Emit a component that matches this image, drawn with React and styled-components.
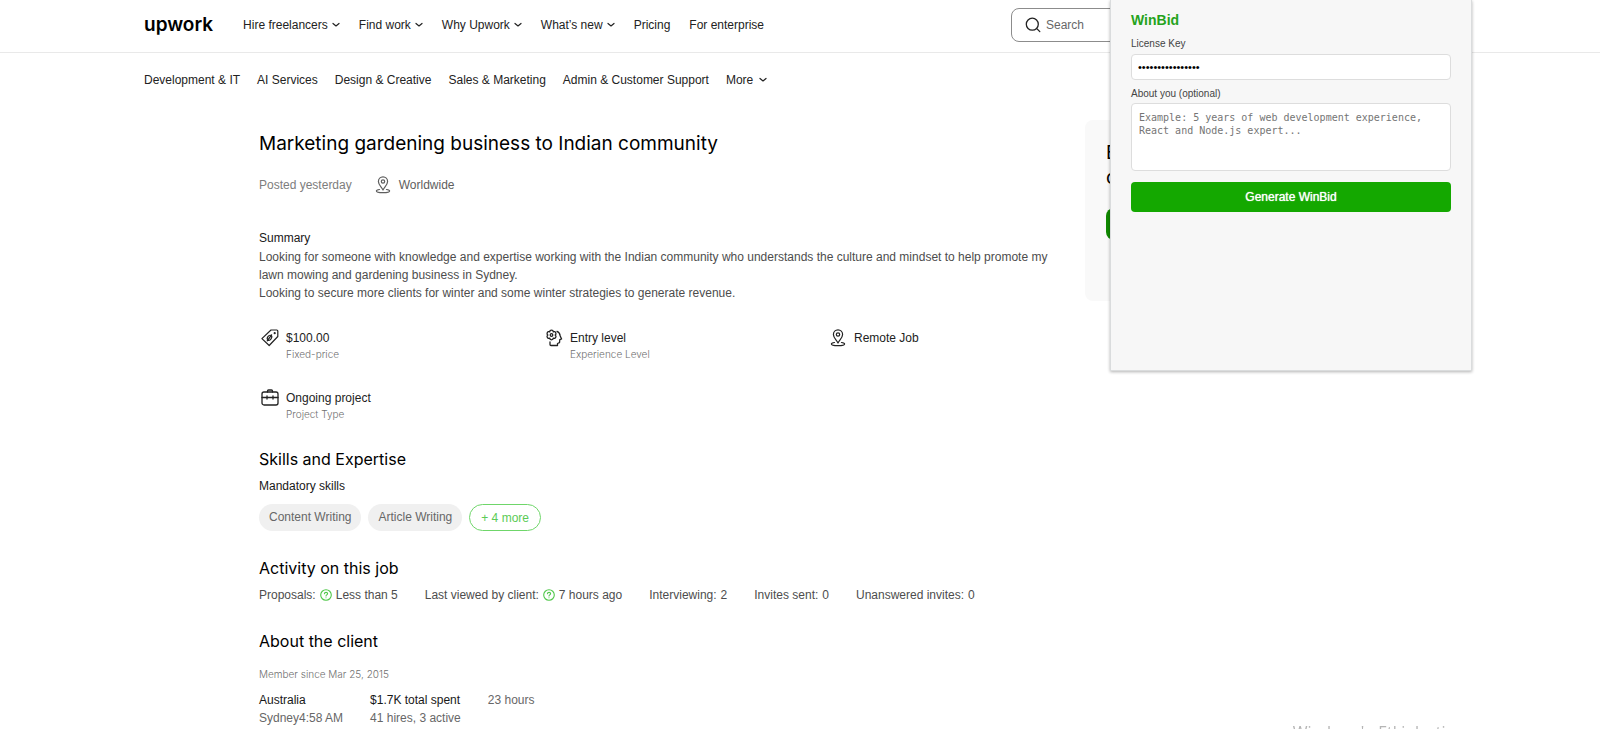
import React from "react";
import styled, { createGlobalStyle } from "styled-components";

const GlobalStyle = createGlobalStyle`
    *,
    *::before,
    *::after {
        box-sizing: border-box;
    }

    body {
        margin: 0;
        background: #fff;
        color: #222;
        font-family: "Liberation Sans", Arial, sans-serif;
        font-size: 12px;
        line-height: 18px;
    }

    h1, h2, h3, p, ul {
        margin: 0;
        padding: 0;
    }

    ul {
        list-style: none;
    }

    a {
        color: inherit;
        text-decoration: none;
    }
`;

const Header = styled.header`
    padding-bottom: 2px;
    border-bottom: 1px solid #e9e9e9;
`;

const Container = styled.div`
    display: flex;
    align-items: center;
    max-width: 1344px;
    height: ${props => props.height};
    margin: 0 auto;
    padding: 0 16px;
`;

const Logo = styled.a`
    margin-right: 30px;
    color: #000;
    font-family: Inter, sans-serif;
    font-size: 19px;
    font-weight: 600;
    line-height: 24px;
`;

const NavList = styled.ul`
    display: flex;
    gap: ${props => props.gap};
    white-space: nowrap;
`;

const NavButton = styled.button`
    display: flex;
    align-items: center;
    gap: ${props => (props.$wide ? "6px" : "4px")};
    padding: 0;
    border: 0;
    background: none;
    color: inherit;
    font: inherit;
    cursor: pointer;
`;

const SearchBox = styled.form`
    display: flex;
    align-items: center;
    gap: 5px;
    width: 445px;
    height: 34px;
    margin-left: auto;
    padding: 0 13px;
    border: 1px solid #8c8c8c;
    border-radius: 8px;
`;

const SearchInput = styled.input`
    flex: 1;
    min-width: 0;
    padding: 0;
    border: 0;
    outline: 0;
    background: none;
    font: inherit;

    &::placeholder {
        color: #676767;
        opacity: 1;
    }
`;

const JobPage = styled.div`
    display: flex;
    justify-content: space-between;
    gap: 24px;
    max-width: 1114px;
    margin: 0 auto;
    padding: 13px 16px 0;
`;

const JobMain = styled.main`
    flex: 0 1 796px;
    padding-top: 10px;
`;

const Title = styled.h1`
    color: #000;
    font-family: Inter, sans-serif;
    font-size: 19px;
    font-weight: 400;
    line-height: 28px;
`;

const PostedRow = styled.div`
    display: flex;
    align-items: center;
    gap: 22px;
    height: 20px;
    margin-top: 17px;
    color: #7d7d7d;
`;

const Place = styled.span`
    display: flex;
    align-items: center;
    gap: 7px;
    color: #5e5e5e;
`;

const Summary = styled.section`
    margin-top: 34px;
    color: #4d4d4d;
`;

const SubHeading = styled.h3`
    margin-bottom: 1px;
    color: #181818;
    font-size: 12px;
    font-weight: 400;
    line-height: 18px;
`;

const Features = styled.ul`
    display: grid;
    grid-template-columns: repeat(3, 1fr);
    gap: 27px 56px;
    margin-top: 27px;
`;

const Feature = styled.li`
    display: flex;
    align-items: flex-start;
    gap: 7px;
    padding-left: 2px;
    line-height: 16px;
`;

const FeatureText = styled.div`
    padding-top: 1px;
`;

const FeatureLabel = styled.small`
    display: block;
    color: #707070;
    font-family: Inter, sans-serif;
    font-size: 10px;
    font-weight: 300;
`;

const Section = styled.section`
    margin-top: 25px;
`;

const Heading = styled.h2`
    margin-bottom: 6px;
    color: #000;
    font-family: Inter, sans-serif;
    font-size: 16px;
    font-weight: 400;
    line-height: 24px;
`;

const Chips = styled.div`
    display: flex;
    gap: 7px;
    margin-top: 9px;
`;

const Chip = styled.a`
    padding: 0 10px;
    border-radius: 14px;
    background: #f0f0f0;
    color: #676767;
    line-height: 27px;
`;

const MoreChip = styled.button`
    padding: 0 11px;
    border: 1px solid #6fd66a;
    border-radius: 14px;
    background: #fff;
    color: #5bcb56;
    font: inherit;
    cursor: pointer;
`;

const Activity = styled.ul`
    display: flex;
    flex-wrap: wrap;
    gap: 0 27px;
    color: #4d4d4d;
`;

const ActivityItem = styled.li`
    display: flex;
    align-items: center;
    gap: 4px;
`;

const MemberSince = styled.p`
    margin: 12px 0 8px;
    color: #707070;
    font-family: Inter, sans-serif;
    font-size: 10px;
    font-weight: 300;
`;

const ClientFacts = styled.ul`
    display: flex;
    gap: 27px;
    color: #676767;
`;

const Strong = styled.span`
    display: block;
    color: #181818;
`;

const ApplyCard = styled.aside`
    flex: 0 0 256px;
    align-self: flex-start;
    min-height: 181px;
    padding: 20px 21px;
    border-radius: 8px;
    background: #f9f9f9;
`;

const ApplyTitle = styled.p`
    color: #000;
    font-family: Inter, sans-serif;
    font-size: 19px;
    line-height: 25px;
`;

const ApplyButton = styled.button`
    width: 100%;
    height: 32px;
    margin-top: 18px;
    border: 0;
    border-radius: 8px;
    background: #108a00;
    color: #fff;
    font: inherit;
`;

const Popup = styled.form`
    position: absolute;
    top: 0;
    right: 128px;
    display: flex;
    flex-direction: column;
    width: 362px;
    height: 371px;
    padding: 10px 20px;
    border: 1px solid #dadcdd;
    border-top: 0;
    background: #f7f7f7;
    box-shadow: 0 1px 3px rgba(0, 0, 0, 0.3);
`;

const PopupTitle = styled.h2`
    color: #25a31c;
    font-size: 14px;
    font-weight: 700;
    line-height: 20px;
`;

const PopupLabel = styled.label`
    margin-top: 6px;
    color: #444;
    font-size: 10px;
    line-height: 16px;
`;

const fieldBorder = "1px solid #dddddd";

const KeyInput = styled.input`
    height: 26px;
    margin-top: 2px;
    padding: 0 6px;
    border: ${fieldBorder};
    border-radius: 4px;
    background: #fff;
    color: #000;
    font-family: "Liberation Sans", Arial, sans-serif;
    font-size: 11px;
`;

const AboutInput = styled.textarea`
    height: 68px;
    margin-top: 1px;
    padding: 7px;
    border: ${fieldBorder};
    border-radius: 4px;
    background: #fff;
    font-family: "DejaVu Sans Mono", monospace;
    font-size: 10px;
    line-height: 13px;
    resize: none;

    &::placeholder {
        color: #757575;
        opacity: 1;
    }
`;

const GenerateButton = styled.button`
    height: 30px;
    margin-top: 11px;
    border: 0;
    border-radius: 4px;
    background: #14a800;
    color: #fff;
    font-family: "Liberation Sans", Arial, sans-serif;
    font-size: 12px;
    text-shadow: 0 0 1px #fff;
    cursor: pointer;
`;

/* desktop notice that hangs past the bottom edge */
const Watermark = styled.div`
    position: fixed;
    right: 148px;
    bottom: -14px;
    color: #b5b5b5;
    font-family: "Open Sans", sans-serif;
    font-size: 16px;
    line-height: 22px;
    white-space: nowrap;
`;

const Line = styled.svg`
    flex: none;
    fill: none;
    stroke: currentColor;
    stroke-linecap: round;
    stroke-linejoin: round;
`;

const Chevron = () => (
    <Line width="8" height="6" viewBox="0 0 8 6" strokeWidth="1.2">
        <path d="M1 1.5 4 4 7 1.5" />
    </Line>
);

const SearchIcon = () => (
    <Line width="16" height="16" viewBox="0 0 16 16" strokeWidth="1.3">
        <circle cx="7.3" cy="7.2" r="6" />
        <path d="m11.8 11.6 3 3" />
    </Line>
);

const PinIcon = () => (
    <Line width="18" height="18" viewBox="-1 0 18 18" strokeWidth="1.2">
        <path d="M8 14C6.6 11.2 3.4 8.8 3.4 5.4a4.6 4.6 0 0 1 9.2 0C12.6 8.8 9.4 11.2 8 14Z" />
        <circle cx="8" cy="5.5" r="1.7" />
        <path d="M4.5 13.5c-1.8.3-3.1.8-3.1 1.4 0 1 3 1.7 6.6 1.7s6.6-.7 6.600-1.700c0-.6-1.300-1.100-3.100-1.400" />
    </Line>
);

const TagIcon = () => (
    <Line width="18" height="18" viewBox="0 0 18 18" strokeWidth="1.2">
        <path d="M10 1h5.800a1 1 0 0 1 1 1v5.500L8.200 16.500.9 9.600Z" />
        <circle cx="13.7" cy="4.2" r=".5" />
        <path d="M10.6 5.8 6.2 11.8" />
        <ellipse cx="8.5" cy="8.8" rx="1.9" ry="2.7" transform="rotate(35 8.5 8.8)" />
    </Line>
);

const LevelIcon = () => (
    <Line width="18" height="18" viewBox="0 0 18 18" strokeWidth="1.3">
        <path d="M4.7 2.9C4.7.6 8.3.6 8.3 2.9 10.3 1.7 12.1 4.8 10.1 6 12.1 7.2 10.3 10.3 8.3 9.1 8.3 11.4 4.7 11.4 4.7 9.1 2.7 10.3.9 7.2 2.9 6 .9 4.8 2.7 1.7 4.7 2.9Z" />
        <circle cx="6.5" cy="6" r="1.3" />
        <path d="M5 13v2.5a1 1 0 0 0 1 1h6.500V14.500l2-.8.3-3 1.800-.7-1.500-3.200c-.1-2-1.200-3.700-3.100-4.500" />
    </Line>
);

const CaseIcon = () => (
    <Line width="18" height="18" viewBox="0 0 18 18" strokeWidth="1.3">
        <rect x="1" y="3" width="16" height="13" rx="2" />
        <path d="M6.5 3V2a1 1 0 0 1 1-1h3a1 1 0 0 1 1 1v1M1 8.5h4m1.5 0h5m1.5 0H17M6 7v3M12 7v3" />
    </Line>
);

const HelpIcon = () => (
    <Line width="12" height="12" viewBox="0 0 12 12" strokeWidth="1.1" color="#50c74a">
        <circle cx="6" cy="6" r="5.3" />
        <path d="M4.4 4.8C4.5 2.8 7.7 2.9 7.6 4.8 7.5 5.9 6 5.9 6 7M6 8.7v.1" />
    </Line>
);

const mainNav = [
    { label: "Hire freelancers", menu: true },
    { label: "Find work", menu: true },
    { label: "Why Upwork", menu: true },
    { label: "What’s new", menu: true },
    { label: "Pricing" },
    { label: "For enterprise" }
];

const categories = [
    "Development & IT",
    "AI Services",
    "Design & Creative",
    "Sales & Marketing",
    "Admin & Customer Support"
];

const features = [
    { icon: TagIcon, value: "$100.00", label: "Fixed-price" },
    { icon: LevelIcon, value: "Entry level", label: "Experience Level" },
    { icon: PinIcon, value: "Remote Job" },
    { icon: CaseIcon, value: "Ongoing project", label: "Project Type" }
];

const activity = [
    { label: "Proposals:", value: "Less than 5", help: true },
    { label: "Last viewed by client:", value: "7 hours ago", help: true },
    { label: "Interviewing:", value: "2" },
    { label: "Invites sent:", value: "0" },
    { label: "Unanswered invites:", value: "0" }
];

const TopBar = () => (
    <Header>
        <Container height="50px">
            <Logo href="#">upwork</Logo>
            <nav>
                <NavList gap="19px">
                    {mainNav.map(item => (
                        <li key={item.label}>
                            {item.menu ? (
                                <NavButton type="button">
                                    {item.label}
                                    <Chevron />
                                </NavButton>
                            ) : (
                                <a href="#">{item.label}</a>
                            )}
                        </li>
                    ))}
                </NavList>
            </nav>
            <SearchBox>
                <SearchIcon />
                <SearchInput type="search" placeholder="Search" aria-label="Search" />
            </SearchBox>
        </Container>
    </Header>
);

const CategoryBar = () => (
    <Container as="nav" height="54px">
        <NavList gap="17px">
            {categories.map(category => (
                <li key={category}>
                    <a href="#">{category}</a>
                </li>
            ))}
            <li>
                <NavButton type="button" $wide>
                    More
                    <Chevron />
                </NavButton>
            </li>
        </NavList>
    </Container>
);

const WinBid = () => (
    <Popup>
        <PopupTitle>WinBid</PopupTitle>
        <PopupLabel htmlFor="license">License Key</PopupLabel>
        <KeyInput id="license" type="password" defaultValue="abcdefghijklmnop" />
        <PopupLabel htmlFor="about">About you (optional)</PopupLabel>
        <AboutInput
            id="about"
            placeholder="Example: 5 years of web development experience, React and Node.js expert..."
        />
        <GenerateButton type="button">Generate WinBid</GenerateButton>
    </Popup>
);

const App = () => {
    return (
        <>
            <GlobalStyle />
            <TopBar />
            <CategoryBar />
            <JobPage>
                <JobMain>
                    <Title>Marketing gardening business to Indian community</Title>
                    <PostedRow>
                        <span>Posted yesterday</span>
                        <Place>
                            <PinIcon />
                            Worldwide
                        </Place>
                    </PostedRow>
                    <Summary>
                        <SubHeading>Summary</SubHeading>
                        <p>
                            Looking for someone with knowledge and expertise working with the
                            Indian community who understands the culture and mindset to help
                            promote my lawn mowing and gardening business in Sydney.
                        </p>
                        <p>
                            Looking to secure more clients for winter and some winter
                            strategies to generate revenue.
                        </p>
                    </Summary>
                    <Features>
                        {features.map(({ icon: Icon, value, label }) => (
                            <Feature key={value}>
                                <Icon />
                                <FeatureText>
                                    {value}
                                    {label && <FeatureLabel>{label}</FeatureLabel>}
                                </FeatureText>
                            </Feature>
                        ))}
                    </Features>
                    {/* Skills */}
                    <Section>
                        <Heading>Skills and Expertise</Heading>
                        <SubHeading>Mandatory skills</SubHeading>
                        <Chips>
                            <Chip href="#">Content Writing</Chip>
                            <Chip href="#">Article Writing</Chip>
                            <MoreChip type="button">+ 4 more</MoreChip>
                        </Chips>
                    </Section>
                    {/* Activity */}
                    <Section>
                        <Heading>Activity on this job</Heading>
                        <Activity>
                            {activity.map(item => (
                                <ActivityItem key={item.label}>
                                    <span>{item.label}</span>
                                    {item.help && <HelpIcon />}
                                    <span>{item.value}</span>
                                </ActivityItem>
                            ))}
                        </Activity>
                    </Section>
                    {/* Client */}
                    <Section>
                        <Heading>About the client</Heading>
                        <MemberSince>Member since Mar 25, 2015</MemberSince>
                        <ClientFacts>
                            <li>
                                <Strong>Australia</Strong>
                                Sydney4:58 AM
                            </li>
                            <li>
                                <Strong>$1.7K total spent</Strong>
                                41 hires, 3 active
                            </li>
                            <li>23 hours</li>
                        </ClientFacts>
                    </Section>
                </JobMain>
                <ApplyCard>
                    <ApplyTitle>
                        E<br />c
                    </ApplyTitle>
                    <ApplyButton type="button" aria-label="Apply" />
                </ApplyCard>
            </JobPage>
            <WinBid />
            <Watermark>Windows'u Etkinleştir</Watermark>
        </>
    );
};

export default App;
